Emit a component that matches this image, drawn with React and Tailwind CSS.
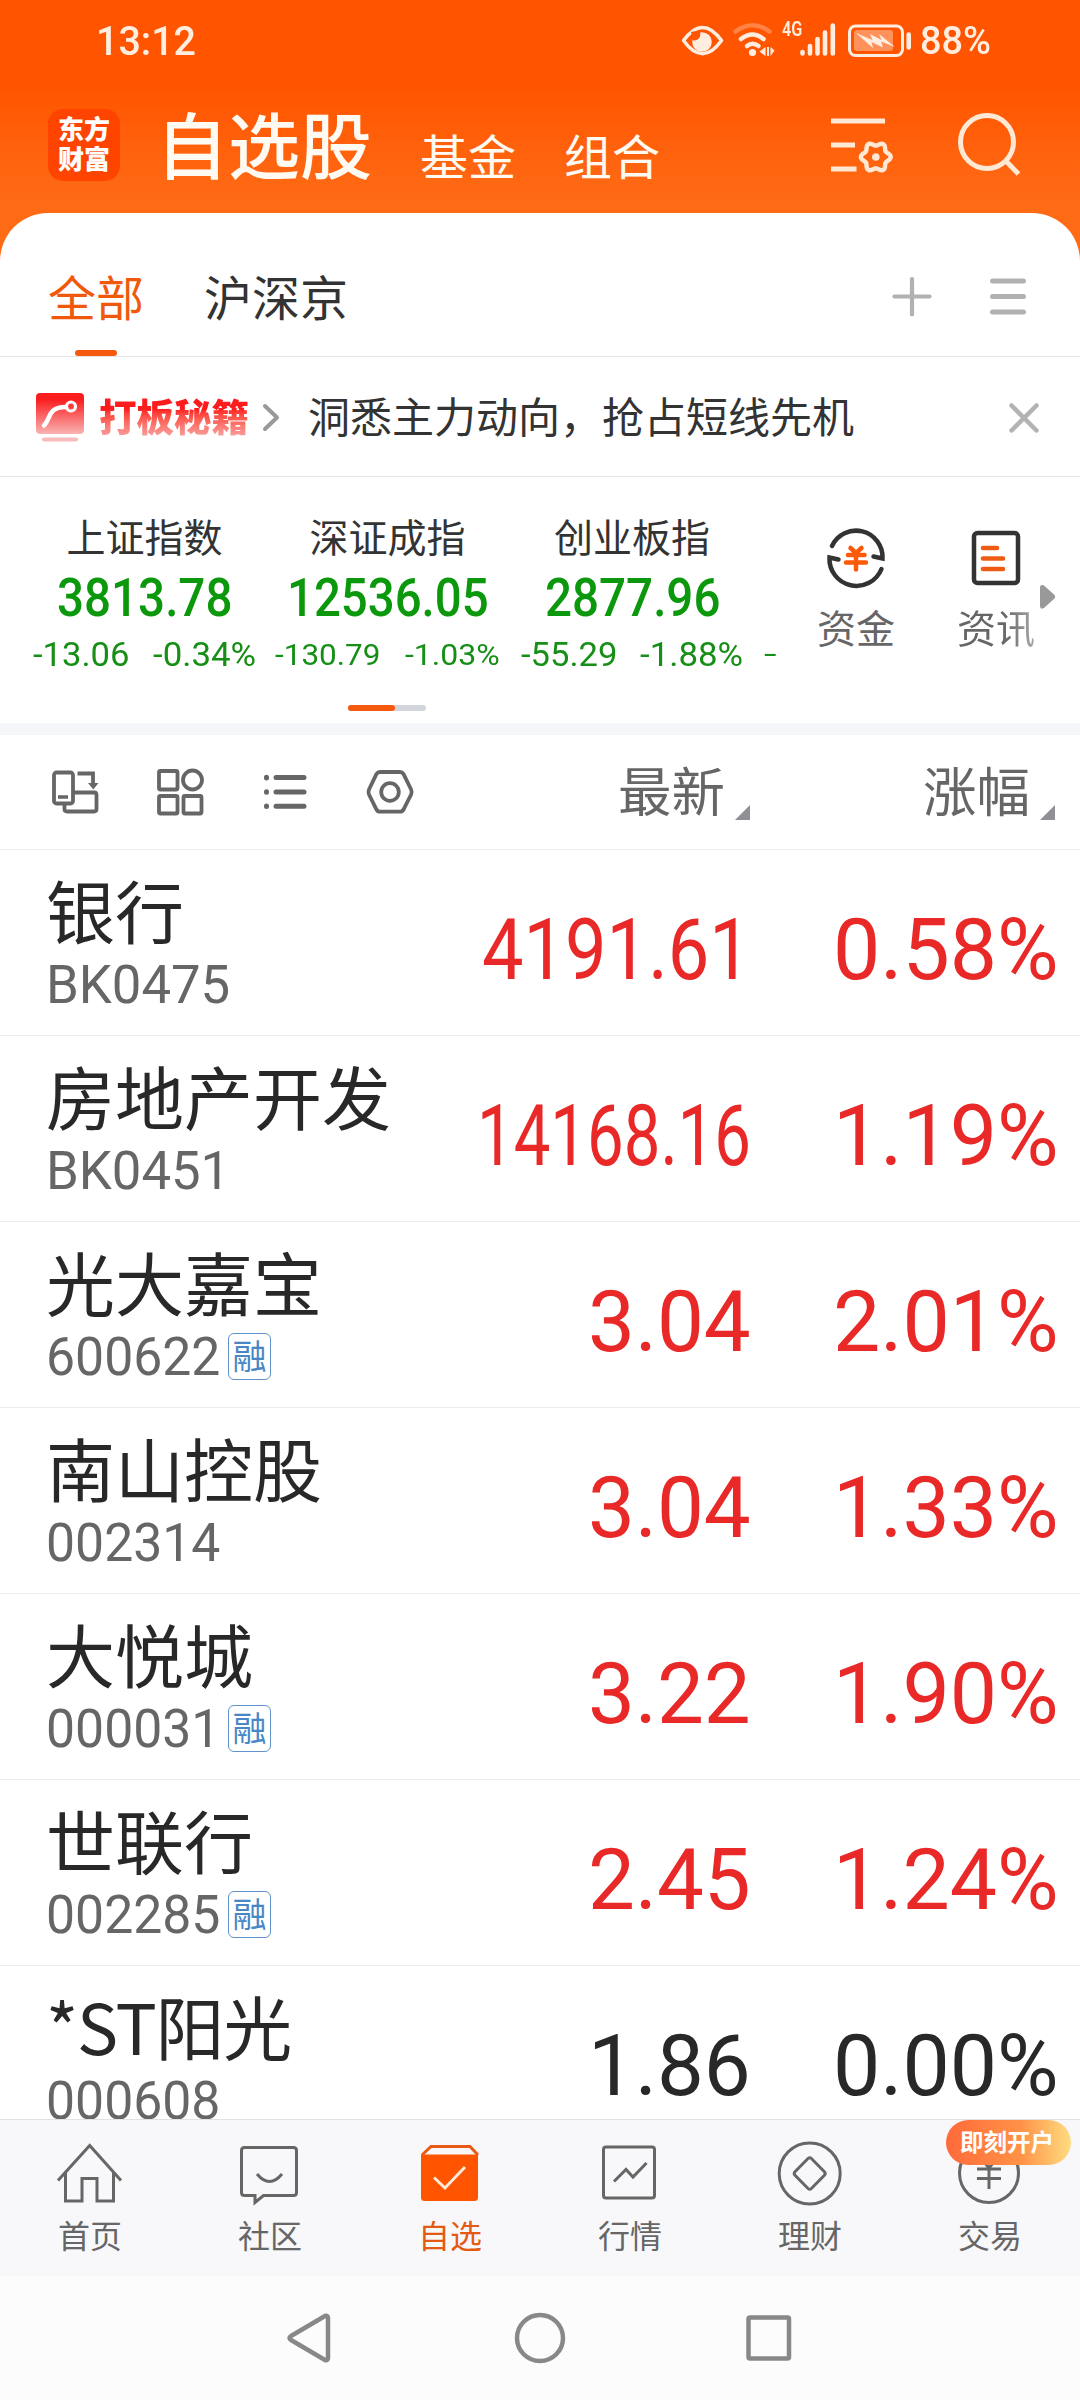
import { useLayoutEffect, useRef, useState } from "react";

const CJK = "font-['Noto_Sans_CJK_SC',sans-serif]";

// Latin / numeric text squeezed horizontally to a given advance width.
function Fit({ w, box = "", className = "", children }) {
  const ref = useRef(null);
  const [k, setK] = useState(1);
  useLayoutEffect(() => {
    setK(w / ref.current.offsetWidth);
  }, [w, children]);
  return (
    <span className={"block shrink-0 " + box} style={{ width: w }}>
      <span
        ref={ref}
        className={"inline-block origin-left whitespace-pre align-top font-[Roboto,sans-serif] " + className}
        style={{ transform: `scaleX(${k})` }}
      >
        {children}
      </span>
    </span>
  );
}

// Six-lobed outline of the settings gear.
const gearPath =
  Array.from({ length: 72 }, (_, i) => {
    const a = (i * Math.PI) / 36;
    const r = 13.1 + 1.8 * Math.cos(6 * a);
    return `${i ? "L" : "M"}${(875.8 + r * Math.cos(a)).toFixed(2)} ${(157 + r * Math.sin(a)).toFixed(2)}`;
  }).join("") + "Z";

function StatusBar() {
  return (
    <div className="flex h-[82px] shrink-0 items-center pl-[96px] text-[#ffeee0]">
      <Fit w={100} className="text-[41px] leading-[83px] font-medium">13:12</Fit>
      <svg className="ml-[474px] h-[60px] w-[236px] shrink-0" viewBox="670 10 236 60" fill="none" stroke="currentColor">
        <path d="M683.500 39.500C696 22 709 22 721.500 39.500C709 57 696 57 683.500 39.500Z" strokeWidth="3.500" strokeLinejoin="round" />
        <circle cx="702" cy="41" r="9.800" fill="currentColor" stroke="none" />
        <path d="M691 31l8.500-1.500c2.500 6-1 10.500-6.500 10z" fill="#ff5500" stroke="none" />
        <g strokeWidth="4.500" strokeLinecap="round">
          <path d="M735.500 30.500Q752.500 18 769.500 30.500" strokeOpacity=".3" />
          <path d="M741 38Q752.500 29 763.500 38" />
          <path d="M747 45Q752.500 40.500 758.500 45" />
        </g>
        <circle cx="752.500" cy="51.500" r="3.600" fill="currentColor" stroke="none" />
        <path d="M765.500 46v9l-6-4.500zM767 46h2v9h-2zM770.500 46l4 3.500-4 5.500z" fill="currentColor" stroke="none" />
        <g strokeWidth="4.600" strokeLinecap="round">
          <path d="M802.500 51v1.500M810 45v7.500M817.500 38v14.500M825 31.500v21M832.800 24.500v28" />
        </g>
        <rect x="849.500" y="25" width="53" height="29.500" rx="6" strokeWidth="3" />
      </svg>
      <div className="-ml-[124px] h-[60px] w-[18px] shrink-0">
        <Fit w={20} box="pt-1" className="text-[21px] leading-[28px] font-semibold">4G</Fit>
      </div>
      <svg className="ml-[46px] h-[60px] w-[66px] shrink-0" viewBox="846 10 66 60" fill="none" stroke="currentColor">
        <rect x="854" y="29" width="39" height="21" rx="3" fill="currentColor" fillOpacity=".4" stroke="none" />
        <path d="M856 32l16.500 7-2.500-6 11.500 6-2.500-6 16 13-14-5.500 2 6-11.500-5.500 1.500 6z" fill="currentColor" stroke="none" />
        <path d="M908.700 33.500v13" strokeWidth="4.600" strokeLinecap="round" />
      </svg>
      <Fit w={71} box="ml-[8px]" className="text-[39px] leading-[84px] font-medium">88%</Fit>
    </div>
  );
}

function Header() {
  return (
    <div className="flex h-[131px] shrink-0 items-start pl-12 text-[#fffaf2]">
      <div className={"mt-[27px] flex h-[72px] w-[72px] flex-col items-center justify-center rounded-[15px] bg-[#ff4400] pb-1 text-[26px] leading-[30px] font-black text-white " + CJK}>
        <span>东方</span>
        <span>财富</span>
      </div>
      <span className={"ml-[36px] w-[216px] text-[72px] leading-[120px] font-medium whitespace-nowrap " + CJK}>自选股</span>
      <span className={"ml-[48px] mt-[12px] text-[48px] leading-[120px] whitespace-nowrap " + CJK}>基金</span>
      <span className={"ml-[48px] mt-[12px] text-[48px] leading-[120px] whitespace-nowrap " + CJK}>组合</span>
      <svg className="ml-[168px] mt-[18px] h-[100px] w-[220px] text-[#ffe8d4]" viewBox="828 100 220 100" fill="none" stroke="currentColor" strokeWidth="5">
        <path d="M831 121h54M831 145h24M831 169h25.500" />
        <path d={gearPath} strokeWidth="4.400" strokeLinejoin="round" />
        <circle cx="875.800" cy="157" r="3.800" fill="currentColor" stroke="none" />
        <circle cx="987" cy="142" r="26.500" />
        <path d="M1005.500 160.500L1018.500 174" />
      </svg>
    </div>
  );
}

function Tabs() {
  return (
    <div className={"flex h-[144px] shrink-0 border-b border-[#e4e4e4] pl-12 text-[48px] leading-[164px] text-[#333] " + CJK}>
      <div className="relative w-[97px] whitespace-nowrap text-[#f0590c]">
        全部
        <span className="absolute bottom-0 left-[27px] h-[6px] w-[42px] rounded-full bg-[#f5590d]" />
      </div>
      <div className="ml-[59px] whitespace-nowrap">沪深京</div>
      <svg className="ml-[539px] mt-[58px] h-[50px] w-[144px]" viewBox="887 271 144 50" fill="none" stroke="#b1b1b1" strokeLinecap="round">
        <path d="M894.500 296.500h35M912 279v35.500" strokeWidth="4.200" />
        <path d="M992.500 281h31M992.500 296.500h31M992.500 312h31" strokeWidth="5" />
      </svg>
    </div>
  );
}

function Promo() {
  return (
    <div className={"flex h-[120px] shrink-0 items-center border-b border-[#e4e4e4] pl-[34px] " + CJK}>
      <svg className="h-[56px] w-[54px]" viewBox="34 388 54 56" fill="none">
        <defs>
          <linearGradient id="promo" x1="0" y1="0" x2="0" y2="1">
            <stop offset="0.150" stopColor="#fb1c1e" />
            <stop offset="1" stopColor="#f9b4b4" />
          </linearGradient>
        </defs>
        <rect x="36" y="392" width="48" height="41" rx="4" fill="url(#promo)" />
        <path d="M44 424.500C51 418 47 406 66 406" stroke="#fff" strokeWidth="4.500" strokeLinecap="round" />
        <circle cx="71" cy="405.500" r="4.500" stroke="#fff" strokeWidth="3.200" />
        <path d="M44 438.500h32" stroke="#f9bcbc" strokeWidth="4" strokeLinecap="round" />
      </svg>
      <span className="-mt-[4px] ml-[11px] w-[149px] bg-gradient-to-b from-[#fb1c1e] from-40% to-[#f7a4a4] to-90% bg-clip-text text-[37.500px] leading-[58px] font-black whitespace-nowrap text-transparent">
        打板秘籍
      </span>
      <svg className="ml-[12px] h-[30px] w-[22px]" viewBox="0 0 22 30" fill="none" stroke="#999" strokeWidth="4" strokeLinecap="round" strokeLinejoin="round">
        <path d="M5 4l12 11.500L5 27" />
      </svg>
      <span className="-mt-[3px] ml-[26px] w-[546px] text-[42px] leading-[60px] whitespace-nowrap text-[#333]">洞悉主力动向，抢占短线先机</span>
      <svg className="ml-[154px] mt-[2px] h-[32px] w-[32px]" viewBox="0 0 32 32" fill="none" stroke="#b3b3b3" strokeWidth="4.500" strokeLinecap="round">
        <path d="M3.500 3.500l25 25M28.500 3.500l-25 25" />
      </svg>
    </div>
  );
}

const quotes = [
  { name: "上证指数", value: "3813.78", vw: 175, diff: "-13.06", dw: 96, pct: "-0.34%", pw: 103, size: "text-[33.500px]", cls: "w-[223px] ml-[33px]" },
  { name: "深证成指", value: "12536.05", vw: 202, diff: "-130.79", dw: 106, pct: "-1.03%", pw: 95, size: "text-[30px]", cls: "w-[225px] ml-[19px]" },
  { name: "创业板指", value: "2877.96", vw: 175, diff: "-55.29", dw: 96, pct: "-1.88%", pw: 103, size: "text-[33.500px]", cls: "w-[222px] ml-[21px]" },
];

function Indices() {
  return (
    <div className="flex h-[246px] shrink-0 flex-col">
      <div className="flex h-[228px]">
        {quotes.map((q) => (
          <div key={q.name} className={"flex flex-col items-center " + q.cls}>
            <span className={"mt-[28px] text-[39px] leading-[60px] text-[#333] whitespace-nowrap " + CJK}>{q.name}</span>
            <Fit w={q.vw} box="mt-[3px]" className="text-[53px] leading-[60px] font-medium text-[#0c980c]">{q.value}</Fit>
            <div className="mt-[7px] flex w-full items-baseline justify-between text-[#168f16]">
              <Fit w={q.dw} className={"leading-[40px] " + q.size}>{q.diff}</Fit>
              <Fit w={q.pw} className={"leading-[40px] " + q.size}>{q.pct}</Fit>
            </div>
          </div>
        ))}
        <Fit w={13} box="ml-[21px] mt-[157px]" className="text-[28px] leading-[40px] text-[#168f16]">-</Fit>
        <div className="ml-[40px] flex flex-col items-center">
          <svg className="mt-[48px] h-[66px] w-[66px]" viewBox="823 525 66 66" fill="none" stroke="#333" strokeWidth="4.500" strokeLinecap="round">
            <path d="M832 546A26.500 26.500 0 0 1 882.500 558.500L873.500 556.500" />
            <path d="M881.500 569A27 27 0 0 1 829.500 557.500L838.500 559.500" />
            <path d="M850.500 548l5.500 5 5.500-5M848 555h16.500M846 562.500h20M856 553.500v16" stroke="#fb5a0a" strokeWidth="4.500" />
          </svg>
          <span className={"text-[39px] leading-[70px] text-[#666] whitespace-nowrap " + CJK}>资金</span>
        </div>
        <div className="ml-[62px] flex flex-col items-center">
          <svg className="mt-[48px] h-[66px] w-[66px]" viewBox="964 525 66 66" fill="none" strokeLinecap="round">
            <rect x="975" y="533" width="44" height="50" rx="3.500" stroke="#333" strokeWidth="4.500" />
            <path d="M984 548h14M984 558.500h20M984 569h20" stroke="#ee5c14" strokeWidth="4.600" />
          </svg>
          <span className={"bg-gradient-to-r from-[#666] from-60% to-[#aaa] bg-clip-text text-[39px] leading-[70px] whitespace-nowrap text-transparent " + CJK}>资讯</span>
        </div>
        <svg className="ml-[3px] mt-[105px] h-[30px] w-[20px]" viewBox="1039 582 20 30" fill="#999">
          <path d="M1041 588q0-4.500 4-2.500l10.500 9.500q1.500 1.800 0 3.500l-10.500 9.500q-4 2-4-2.500z" />
        </svg>
      </div>
      <div className="ml-[348px] flex h-[6px] w-[78px] rounded-full bg-[#d2d6dc]">
        <span className="h-[6px] w-[47px] rounded-full bg-[#f5590d]" />
      </div>
    </div>
  );
}

function SortLabel({ children, className }) {
  return (
    <div className={"flex items-start " + className}>
      <span className={"w-[107px] text-[53.5px] leading-[108px] text-[#666] whitespace-nowrap " + CJK}>{children}</span>
      <svg className="ml-[10px] mt-[70px] h-[15px] w-[15px]" viewBox="0 0 15 15" fill="#8f8f94">
        <path d="M15 0v15H0z" />
      </svg>
    </div>
  );
}

function Toolbar() {
  return (
    <div className="flex h-[115px] shrink-0 border-b border-[#ebebeb] pl-12">
      <svg className="mt-[30px] h-[54px] w-[370px]" viewBox="48 765 370 54" fill="none" stroke="#666" strokeWidth="3.800">
        <rect x="54" y="772.500" width="19" height="31" rx="2.500" />
        <path d="M58 797h10" strokeWidth="3.500" />
        <path d="M64.500 804v5q0 2.500 2.500 2.500h27q2.500 0 2.500-2.500v-14q0-2.500-2.500-2.500h-20M77.500 773.500h15.500v12" />
        <path d="M88 783h10.500l-5.200 6.500z" fill="#666" stroke="none" />
        <rect x="159" y="771" width="18.500" height="18.500" rx="1.500" />
        <circle cx="192.500" cy="780" r="9.500" />
        <rect x="159" y="796" width="18.500" height="17.500" rx="1.500" />
        <rect x="183.500" y="796" width="18" height="17.500" rx="1.500" />
        <g strokeWidth="5" strokeLinecap="round">
          <path d="M266.500 777.300v.6M266.500 791.700v.6M266.500 806v.6M276 777.600h28M276 792h28M276 806.300h28" />
        </g>
        <path d="M380 772h20q2.300 0 3.500 2l7.600 15.500q1.100 2.500 0 5L403.500 809.500q-1.200 2.200-3.500 2.200h-20q-2.300 0-3.500-2.200L369 794.500q-1.100-2.500 0-5L376.500 774q1.200-2 3.500-2Z" />
        <circle cx="390" cy="792" r="8.800" />
      </svg>
      <SortLabel className="ml-[200px]">最新</SortLabel>
      <SortLabel className="ml-[173px]">涨幅</SortLabel>
    </div>
  );
}

const stocks = [
  { name: "银行", code: "BK0475", cw: 184, price: "4191.61", w: 269, pct: "0.58%" },
  { name: "房地产开发", code: "BK0451", cw: 184, price: "14168.16", w: 274, pct: "1.19%" },
  { name: "光大嘉宝", code: "600622", cw: 174, margin: true, price: "3.04", w: 163, pct: "2.01%" },
  { name: "南山控股", code: "002314", cw: 174, price: "3.04", w: 163, pct: "1.33%" },
  { name: "大悦城", code: "000031", cw: 174, margin: true, price: "3.22", w: 163, pct: "1.90%" },
  { name: "世联行", code: "002285", cw: 174, margin: true, price: "2.45", w: 163, pct: "1.24%" },
  { name: "*ST阳光", code: "000608", cw: 174, price: "1.86", w: 163, pct: "0.00%", flat: true },
];

function StockRow({ s }) {
  return (
    <div className="flex h-[186px] shrink-0 border-b border-[#ebebeb] pl-[46px]">
      <div className="flex flex-1 flex-col">
        <span className={"mt-[19px] h-[80px] text-[69px] leading-[80px] text-[#282828] whitespace-nowrap " + (s.flat ? "tracking-[-1.2px] " : "") + CJK}>{s.name}</span>
        <div className="mt-[10px] flex h-[50px] items-center">
          <Fit w={s.cw} className="text-[53.500px] leading-[51px] text-[#666]">{s.code}</Fit>
          {s.margin && (
            <span className={"ml-[8px] flex h-[47px] w-[43px] items-center justify-center rounded-[6px] border-[1.5px] border-[#5f93c9] text-[34px] leading-[40px] text-[#4886c6] " + CJK}>
              <span className="-mt-[3px]">融</span>
            </span>
          )}
        </div>
      </div>
      <div className={"flex " + (s.flat ? "text-[#282828]" : "text-[#e92828]")}>
        <Fit w={s.w} className="text-[86px] leading-[200px]">{s.price}</Fit>
        <Fit w={226} box="ml-[82px] mr-[21px]" className="text-[86px] leading-[200px]">{s.pct}</Fit>
      </div>
    </div>
  );
}

const navIcons = {
  首页: (
    <path d="M58 2180.500L89.700 2145.500L121 2180.500M65.500 2173v28h16.500v-22.500h15v22.500h16.500v-28" />
  ),
  社区: (
    <>
      <path d="M244.500 2147.500h49q3 0 3 3v42q0 3-3 3h-30l-8.500 7v-7h-10.500q-3 0-3-3v-42q0-3 3-3Z" />
      <path d="M257 2174q12.500 15 25 0" />
    </>
  ),
  自选: (
    <>
      <path d="M422 2155l9-8.500h39l8 8.500" stroke="#ea5a14" />
      <path d="M421 2154.500h57v43q0 3.500-3.500 3.500h-50q-3.500 0-3.500-3.500z" fill="#ff5500" stroke="none" />
      <path d="M434 2177.500l11 10.500 20-21" stroke="#ffe9d8" />
    </>
  ),
  行情: (
    <>
      <rect x="603.500" y="2147" width="51" height="51" rx="2.500" />
      <path d="M614 2181.500l12-12 7 7.500 13.500-14" />
    </>
  ),
  理财: (
    <>
      <circle cx="809.700" cy="2173.500" r="30.500" />
      <path d="M808 2158.500q1.700-1.500 3.400 0l13 13.200q1.600 1.800 0 3.600l-13 13.200q-1.700 1.500-3.400 0l-13-13.200q-1.600-1.800 0-3.600z" />
    </>
  ),
  交易: (
    <>
      <circle cx="989" cy="2173" r="29.500" />
      <path d="M979 2156l10 12 10-12M977 2169h24M977 2178.500h24M989 2168v21" />
    </>
  ),
};

function BottomNav() {
  return (
    <div className="grid h-[157px] shrink-0 grid-cols-6 border-t border-[#e2e2e4] bg-[#f8f8fb]">
      {Object.keys(navIcons).map((label, i) => (
        <div key={label} className={"relative flex flex-col items-center " + (label === "自选" ? "text-[#e35a14]" : "text-[#666]")}>
          <svg className="mt-[14px] h-[80px] w-[80px]" viewBox={`${50 + i * 180} 2134 80 80`} fill="none" stroke="currentColor" strokeWidth="3">
            {navIcons[label]}
          </svg>
          <span className={"-mt-[3px] text-[32px] leading-[46px] whitespace-nowrap " + CJK}>{label}</span>
          {label === "交易" && (
            <span className={"absolute top-0 left-[46px] flex h-[45px] w-[125px] items-center justify-center rounded-full bg-gradient-to-r from-[#ff6a3a] via-[#ff9247] via-60% to-[#ffdc80] pr-[3px] pb-[3px] text-[23.500px] leading-[30px] font-bold text-white whitespace-nowrap " + CJK}>
              即刻开户
            </span>
          )}
        </div>
      ))}
    </div>
  );
}

function SystemNav() {
  return (
    <div className="flex h-[124px] shrink-0 items-center justify-center bg-[#fcfcfc]">
      <svg className="h-[60px] w-[540px]" viewBox="270 2308 540 60" fill="none" stroke="#888" strokeWidth="4.500" strokeLinejoin="round">
        <path d="M325 2316Q328 2315 328 2318V2358Q328 2361 325 2360L291 2340Q288 2338 291 2336Z" />
        <circle cx="540" cy="2338" r="23" />
        <rect x="748.500" y="2317.500" width="40.500" height="41" rx="1.500" />
      </svg>
    </div>
  );
}

export default function App() {
  return (
    <div className="flex h-[2400px] w-[1080px] flex-col overflow-hidden bg-[linear-gradient(to_bottom,#ff5500_0px,#ff5500_88px,#ff6a15_195px,#ff6a15_300px)]">
      <StatusBar />
      <Header />
      <div className="flex h-[1906px] shrink-0 flex-col overflow-hidden rounded-t-[48px] bg-white">
        <Tabs />
        <Promo />
        <Indices />
        <div className="h-3 shrink-0 bg-[#f5f6f9]" />
        <Toolbar />
        {stocks.map((s) => (
          <StockRow key={s.code} s={s} />
        ))}
      </div>
      <BottomNav />
      <SystemNav />
    </div>
  );
}
